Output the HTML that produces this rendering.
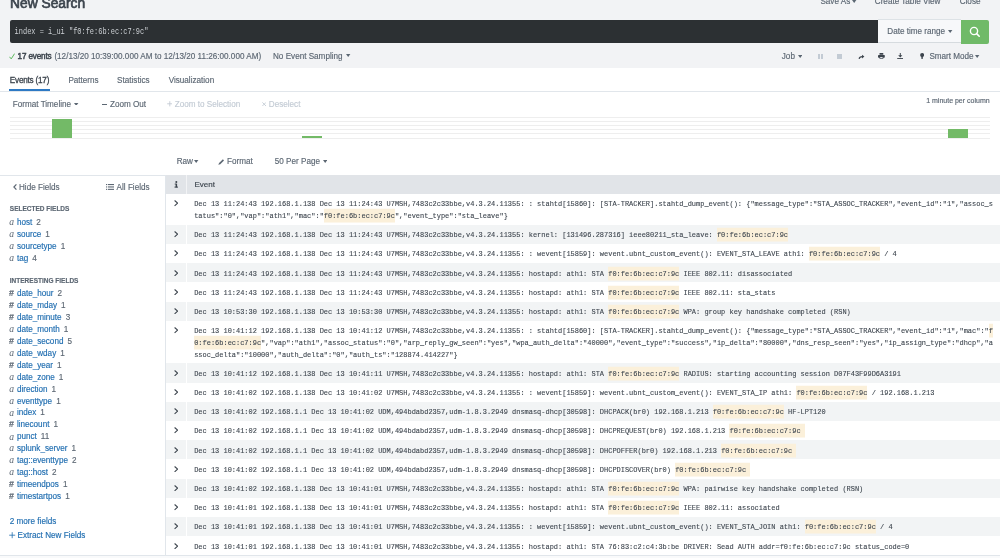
<!DOCTYPE html><html><head><meta charset="utf-8"><title>New Search</title><style>
*{margin:0;padding:0}
html,body{width:1000px;height:558px;overflow:hidden;background:#fff}
body{position:relative;font-family:"Liberation Sans",sans-serif}
#wrap{position:absolute;left:0;top:0;width:1000px;height:558px;overflow:hidden;will-change:transform}
.r{position:absolute;display:block}
.s,.m,.i,.i2{position:absolute;white-space:nowrap;line-height:1}
.s{font-family:"Liberation Sans",sans-serif;-webkit-text-stroke-width:0.15px}
.m{font-family:"Liberation Mono",monospace}
.i{font-family:"Liberation Serif",serif;font-style:italic}
.i2{font-family:"Liberation Serif",serif}
.m b{font-weight:normal;background:#fbf0da;padding:2.4px 0 1.6px}
</style></head><body><div id="wrap">
<div class="r" style="left:0.00px;top:0.00px;width:1000.00px;height:68.00px;background:#f2f3f5;"></div>
<div class="s" style="left:10.00px;top:-2.90px;font-size:13.8px;color:#3c444d;-webkit-text-stroke:0.65px #3c444d;">New Search</div>
<div class="s" style="left:820.40px;top:-2.08px;font-size:8.15px;color:#5c6773;">Save As</div>
<svg class="r" style="left:852.40px;top:-0.30px" width="4.4" height="2.9" viewBox="0 0 4.4 2.9"><path d="M0 0H4.4L2.2 2.9Z" fill="#5c6773"/></svg>
<div class="s" style="left:874.80px;top:-2.08px;font-size:8.15px;color:#5c6773;">Create Table View</div>
<div class="s" style="left:959.70px;top:-2.08px;font-size:8.15px;color:#5c6773;">Close</div>
<div class="r" style="left:10.00px;top:20.00px;width:868.00px;height:22.50px;background:#2c3033;border-radius:2px 0 0 2px"></div>
<div class="m" style="left:14.60px;top:28.81px;font-size:6.975px;color:#cdd1d5;transform:scaleY(1.2);transform-origin:0 5.35px;">index = i_ui "f0:fe:6b:ec:c7:9c"</div>
<div class="r" style="left:878.40px;top:19.40px;width:82.60px;height:24.00px;background:#f7f8fa;box-sizing:border-box;border-top:1px solid #dde2e6;border-bottom:1px solid #d6dbdf"></div>
<div class="s" style="left:887.30px;top:27.72px;font-size:8.15px;color:#5c6773;">Date time range</div>
<svg class="r" style="left:948.20px;top:29.80px" width="4.4" height="2.9" viewBox="0 0 4.4 2.9"><path d="M0 0H4.4L2.2 2.9Z" fill="#5c6773"/></svg>
<div class="r" style="left:961.00px;top:19.50px;width:27.70px;height:24.00px;background:#70ba68;border-radius:0 2px 2px 0"></div>
<svg class="r" style="left:968px;top:24.5px" width="14" height="14" viewBox="0 0 14 14"><circle cx="6" cy="6" r="3.6" fill="none" stroke="#fff" stroke-width="1.4"/><path d="M8.6 8.6L11.2 11.2" stroke="#fff" stroke-width="1.6" stroke-linecap="round"/></svg>
<svg class="r" style="left:9.4px;top:52.6px" width="6" height="6.6" viewBox="0 0 6 6.6"><path d="M0.5 3.8L2.2 5.9L5.6 0.6" fill="none" stroke="#5cb85c" stroke-width="1"/></svg>
<div class="s" style="left:17.60px;top:52.62px;font-size:8.15px;color:#3c444d;-webkit-text-stroke:0.45px #3c444d;letter-spacing:-0.15px;">17 events</div>
<div class="s" style="left:54.40px;top:52.62px;font-size:8.15px;color:#5c6773;">(12/13/20 10:39:00.000 AM to 12/13/20 11:26:00.000 AM)</div>
<div class="s" style="left:273.00px;top:52.62px;font-size:8.15px;color:#5c6773;">No Event Sampling</div>
<svg class="r" style="left:346.20px;top:54.40px" width="4.4" height="2.9" viewBox="0 0 4.4 2.9"><path d="M0 0H4.4L2.2 2.9Z" fill="#5c6773"/></svg>
<div class="s" style="left:781.80px;top:52.92px;font-size:8.15px;color:#5c6773;">Job</div>
<svg class="r" style="left:797.80px;top:54.70px" width="4.4" height="2.9" viewBox="0 0 4.4 2.9"><path d="M0 0H4.4L2.2 2.9Z" fill="#5c6773"/></svg>
<div class="r" style="left:818.00px;top:54.00px;width:1.60px;height:4.80px;background:#c3cbd4;"></div>
<div class="r" style="left:821.30px;top:54.00px;width:1.60px;height:4.80px;background:#c3cbd4;"></div>
<div class="r" style="left:837.20px;top:54.00px;width:4.70px;height:4.80px;background:#c3cbd4;"></div>
<svg class="r" style="left:858px;top:54px" width="7" height="6" viewBox="0 0 7 6"><path d="M1.1 4.9C1.3 3.5 2.3 2.6 4.3 2.6" fill="none" stroke="#3c444d" stroke-width="1.1"/><path d="M4 0.7L6.4 2.6L4 4.5Z" fill="#3c444d"/></svg>
<svg class="r" style="left:877.5px;top:53px" width="7" height="6" viewBox="0 0 7 6"><rect x="1.5" y="0" width="3.8" height="1.7" rx="0.3" fill="#3c444d"/><rect x="0" y="1.9" width="6.8" height="2.9" rx="0.7" fill="#3c444d"/><rect x="1.5" y="3.6" width="3.8" height="2.2" rx="0.3" fill="#3c444d"/><rect x="2.2" y="4.1" width="2.4" height="1" fill="#f2f3f5"/></svg>
<svg class="r" style="left:896.6px;top:53px" width="6.6" height="6.2" viewBox="0 0 6.6 6.2"><path d="M3.3 0V3" stroke="#3c444d" stroke-width="1"/><path d="M1.2 2.3L3.3 4.4L5.4 2.3Z" fill="#3c444d"/><path d="M0.2 5.6H6.4" stroke="#3c444d" stroke-width="1"/></svg>
<svg class="r" style="left:920px;top:53px" width="4.2" height="6" viewBox="0 0 4.2 6"><circle cx="2.1" cy="2" r="2" fill="#3c444d"/><rect x="1.35" y="3" width="1.5" height="2.9" fill="#3c444d"/></svg>
<div class="s" style="left:929.40px;top:52.92px;font-size:8.15px;color:#5c6773;">Smart Mode</div>
<svg class="r" style="left:975.40px;top:54.70px" width="4.4" height="2.9" viewBox="0 0 4.4 2.9"><path d="M0 0H4.4L2.2 2.9Z" fill="#5c6773"/></svg>
<div class="s" style="left:9.80px;top:76.92px;font-size:8.15px;color:#3c444d;-webkit-text-stroke:0.3px #3c444d;letter-spacing:-0.2px;">Events (17)</div>
<div class="s" style="left:68.40px;top:76.92px;font-size:8.15px;color:#5c6773;">Patterns</div>
<div class="s" style="left:117.10px;top:76.92px;font-size:8.15px;color:#5c6773;">Statistics</div>
<div class="s" style="left:168.70px;top:76.92px;font-size:8.15px;color:#5c6773;">Visualization</div>
<div class="r" style="left:9.10px;top:89.20px;width:40.70px;height:2.20px;background:#2d79c4;"></div>
<div class="r" style="left:0.00px;top:91.20px;width:1000.00px;height:1.00px;background:#e1e6eb;"></div>
<div class="s" style="left:12.80px;top:100.92px;font-size:8.15px;color:#5c6773;">Format Timeline</div>
<svg class="r" style="left:74.20px;top:102.60px" width="4.4" height="2.9" viewBox="0 0 4.4 2.9"><path d="M0 0H4.4L2.2 2.9Z" fill="#5c6773"/></svg>
<div class="r" style="left:102.40px;top:104.30px;width:5.00px;height:1.00px;background:#5c6773;"></div>
<div class="s" style="left:110.00px;top:100.92px;font-size:8.15px;color:#5c6773;">Zoom Out</div>
<svg class="r" style="left:166.6px;top:101.4px" width="5.6" height="5.6" viewBox="0 0 5.6 5.6"><path d="M2.8 0.2V5.4M0.2 2.8H5.4" stroke="#c3cbd4" stroke-width="0.9"/></svg>
<div class="s" style="left:174.70px;top:100.92px;font-size:8.15px;color:#c3cbd4;">Zoom to Selection</div>
<svg class="r" style="left:261.6px;top:102.2px" width="4.4" height="4.4" viewBox="0 0 4.4 4.4"><path d="M0.4 0.4L4 4M4 0.4L0.4 4" stroke="#c3cbd4" stroke-width="0.9"/></svg>
<div class="s" style="left:268.80px;top:100.92px;font-size:8.15px;color:#c3cbd4;">Deselect</div>
<div class="s" style="left:926.20px;top:97.10px;font-size:7.0px;color:#5c6773;">1 minute per column</div>
<div class="r" style="left:10.00px;top:116.80px;width:980.00px;height:1.00px;background:#eeeeee;"></div>
<div class="r" style="left:10.00px;top:120.90px;width:980.00px;height:1.00px;background:#eeeeee;"></div>
<div class="r" style="left:10.00px;top:125.00px;width:980.00px;height:1.00px;background:#eeeeee;"></div>
<div class="r" style="left:10.00px;top:129.20px;width:980.00px;height:1.00px;background:#eeeeee;"></div>
<div class="r" style="left:10.00px;top:133.40px;width:980.00px;height:1.00px;background:#eeeeee;"></div>
<div class="r" style="left:10.00px;top:137.70px;width:980.00px;height:1.00px;background:#eeeeee;"></div>
<div class="r" style="left:52.00px;top:118.80px;width:20.00px;height:19.00px;background:#73ba67;"></div>
<div class="r" style="left:302.00px;top:136.20px;width:20.00px;height:1.70px;background:#73ba67;"></div>
<div class="r" style="left:948.00px;top:129.00px;width:20.20px;height:8.80px;background:#73ba67;"></div>
<div class="s" style="left:176.70px;top:158.33px;font-size:8.15px;color:#5c6773;">Raw</div>
<svg class="r" style="left:194.30px;top:160.10px" width="4.4" height="2.9" viewBox="0 0 4.4 2.9"><path d="M0 0H4.4L2.2 2.9Z" fill="#5c6773"/></svg>
<svg class="r" style="left:217.8px;top:159px" width="6.4" height="6" viewBox="0 0 6.4 6"><path d="M0.3 5.7L1.1 4.1L4.9 0.3L6.1 1.5L2.3 5.3Z" fill="#5c6773"/></svg>
<div class="s" style="left:227.00px;top:158.33px;font-size:8.15px;color:#5c6773;">Format</div>
<div class="s" style="left:274.80px;top:158.33px;font-size:8.15px;color:#5c6773;">50 Per Page</div>
<svg class="r" style="left:322.50px;top:160.10px" width="4.4" height="2.9" viewBox="0 0 4.4 2.9"><path d="M0 0H4.4L2.2 2.9Z" fill="#5c6773"/></svg>
<div class="r" style="left:0.00px;top:174.50px;width:165.00px;height:1.00px;background:#e1e6eb;"></div>
<div class="r" style="left:165.00px;top:174.50px;width:1.00px;height:384.00px;background:#e1e6eb;"></div>
<svg class="r" style="left:12.8px;top:184px" width="4" height="6" viewBox="0 0 4 6"><path d="M3.4 0.4L0.9 3L3.4 5.6" fill="none" stroke="#5c6773" stroke-width="1.2"/></svg>
<div class="s" style="left:19.00px;top:183.93px;font-size:8.15px;color:#5c6773;">Hide Fields</div>
<svg class="r" style="left:106px;top:184px" width="8" height="6" viewBox="0 0 8 6"><g fill="#5c6773"><rect x="0" y="0" width="1.2" height="1.1"/><rect x="0" y="2.4" width="1.2" height="1.1"/><rect x="0" y="4.8" width="1.2" height="1.1"/><rect x="2" y="0" width="6" height="1.1"/><rect x="2" y="2.4" width="6" height="1.1"/><rect x="2" y="4.8" width="6" height="1.1"/></g></svg>
<div class="s" style="left:116.60px;top:183.93px;font-size:8.15px;color:#5c6773;">All Fields</div>
<div class="s" style="left:9.80px;top:206.25px;font-size:6.5px;color:#5c6773;font-weight:bold;">SELECTED FIELDS</div>
<div class="i" style="left:9.20px;top:217.20px;font-size:9.6px;color:#5c6773;">a</div>
<div class="s" style="left:16.90px;top:218.93px;font-size:8.15px;color:#1f6db0;">host<span style="color:#5c6773;margin-left:4px">2</span></div>
<div class="i" style="left:9.20px;top:229.13px;font-size:9.6px;color:#5c6773;">a</div>
<div class="s" style="left:16.90px;top:230.86px;font-size:8.15px;color:#1f6db0;">source<span style="color:#5c6773;margin-left:4px">1</span></div>
<div class="i" style="left:9.20px;top:241.06px;font-size:9.6px;color:#5c6773;">a</div>
<div class="s" style="left:16.90px;top:242.79px;font-size:8.15px;color:#1f6db0;">sourcetype<span style="color:#5c6773;margin-left:4px">1</span></div>
<div class="i" style="left:9.20px;top:252.99px;font-size:9.6px;color:#5c6773;">a</div>
<div class="s" style="left:16.90px;top:254.72px;font-size:8.15px;color:#1f6db0;">tag<span style="color:#5c6773;margin-left:4px">4</span></div>
<div class="s" style="left:9.80px;top:277.55px;font-size:6.5px;color:#5c6773;font-weight:bold;">INTERESTING FIELDS</div>
<div class="s" style="left:9.00px;top:289.40px;font-size:8.8px;color:#5c6773;font-weight:bold;">#</div>
<div class="s" style="left:16.90px;top:290.43px;font-size:8.15px;color:#1f6db0;">date_hour<span style="color:#5c6773;margin-left:4px">2</span></div>
<div class="s" style="left:9.00px;top:301.30px;font-size:8.8px;color:#5c6773;font-weight:bold;">#</div>
<div class="s" style="left:16.90px;top:302.32px;font-size:8.15px;color:#1f6db0;">date_mday<span style="color:#5c6773;margin-left:4px">1</span></div>
<div class="s" style="left:9.00px;top:313.20px;font-size:8.8px;color:#5c6773;font-weight:bold;">#</div>
<div class="s" style="left:16.90px;top:314.23px;font-size:8.15px;color:#1f6db0;">date_minute<span style="color:#5c6773;margin-left:4px">3</span></div>
<div class="i" style="left:9.20px;top:324.40px;font-size:9.6px;color:#5c6773;">a</div>
<div class="s" style="left:16.90px;top:326.12px;font-size:8.15px;color:#1f6db0;">date_month<span style="color:#5c6773;margin-left:4px">1</span></div>
<div class="s" style="left:9.00px;top:337.00px;font-size:8.8px;color:#5c6773;font-weight:bold;">#</div>
<div class="s" style="left:16.90px;top:338.03px;font-size:8.15px;color:#1f6db0;">date_second<span style="color:#5c6773;margin-left:4px">5</span></div>
<div class="i" style="left:9.20px;top:348.20px;font-size:9.6px;color:#5c6773;">a</div>
<div class="s" style="left:16.90px;top:349.93px;font-size:8.15px;color:#1f6db0;">date_wday<span style="color:#5c6773;margin-left:4px">1</span></div>
<div class="s" style="left:9.00px;top:360.80px;font-size:8.8px;color:#5c6773;font-weight:bold;">#</div>
<div class="s" style="left:16.90px;top:361.82px;font-size:8.15px;color:#1f6db0;">date_year<span style="color:#5c6773;margin-left:4px">1</span></div>
<div class="i" style="left:9.20px;top:372.00px;font-size:9.6px;color:#5c6773;">a</div>
<div class="s" style="left:16.90px;top:373.73px;font-size:8.15px;color:#1f6db0;">date_zone<span style="color:#5c6773;margin-left:4px">1</span></div>
<div class="i" style="left:9.20px;top:383.90px;font-size:9.6px;color:#5c6773;">a</div>
<div class="s" style="left:16.90px;top:385.62px;font-size:8.15px;color:#1f6db0;">direction<span style="color:#5c6773;margin-left:4px">1</span></div>
<div class="i" style="left:9.20px;top:395.80px;font-size:9.6px;color:#5c6773;">a</div>
<div class="s" style="left:16.90px;top:397.53px;font-size:8.15px;color:#1f6db0;">eventtype<span style="color:#5c6773;margin-left:4px">1</span></div>
<div class="i" style="left:9.20px;top:407.70px;font-size:9.6px;color:#5c6773;">a</div>
<div class="s" style="left:16.90px;top:409.43px;font-size:8.15px;color:#1f6db0;">index<span style="color:#5c6773;margin-left:4px">1</span></div>
<div class="s" style="left:9.00px;top:420.30px;font-size:8.8px;color:#5c6773;font-weight:bold;">#</div>
<div class="s" style="left:16.90px;top:421.32px;font-size:8.15px;color:#1f6db0;">linecount<span style="color:#5c6773;margin-left:4px">1</span></div>
<div class="i" style="left:9.20px;top:431.50px;font-size:9.6px;color:#5c6773;">a</div>
<div class="s" style="left:16.90px;top:433.23px;font-size:8.15px;color:#1f6db0;">punct<span style="color:#5c6773;margin-left:4px">11</span></div>
<div class="i" style="left:9.20px;top:443.40px;font-size:9.6px;color:#5c6773;">a</div>
<div class="s" style="left:16.90px;top:445.13px;font-size:8.15px;color:#1f6db0;">splunk_server<span style="color:#5c6773;margin-left:4px">1</span></div>
<div class="i" style="left:9.20px;top:455.30px;font-size:9.6px;color:#5c6773;">a</div>
<div class="s" style="left:16.90px;top:457.03px;font-size:8.15px;color:#1f6db0;">tag::eventtype<span style="color:#5c6773;margin-left:4px">2</span></div>
<div class="i" style="left:9.20px;top:467.20px;font-size:9.6px;color:#5c6773;">a</div>
<div class="s" style="left:16.90px;top:468.93px;font-size:8.15px;color:#1f6db0;">tag::host<span style="color:#5c6773;margin-left:4px">2</span></div>
<div class="s" style="left:9.00px;top:479.80px;font-size:8.8px;color:#5c6773;font-weight:bold;">#</div>
<div class="s" style="left:16.90px;top:480.82px;font-size:8.15px;color:#1f6db0;">timeendpos<span style="color:#5c6773;margin-left:4px">1</span></div>
<div class="s" style="left:9.00px;top:491.70px;font-size:8.8px;color:#5c6773;font-weight:bold;">#</div>
<div class="s" style="left:16.90px;top:492.73px;font-size:8.15px;color:#1f6db0;">timestartpos<span style="color:#5c6773;margin-left:4px">1</span></div>
<div class="s" style="left:9.80px;top:518.32px;font-size:8.15px;color:#1f6db0;">2 more fields</div>
<svg class="r" style="left:9.4px;top:532.2px" width="6.4" height="6.4" viewBox="0 0 6.4 6.4"><path d="M3.2 0.2V6.2M0.2 3.2H6.2" stroke="#1f6db0" stroke-width="0.8"/></svg>
<div class="s" style="left:17.60px;top:532.32px;font-size:8.15px;color:#1f6db0;">Extract New Fields</div>
<div class="r" style="left:165.50px;top:175.00px;width:834.50px;height:19.00px;background:#e1e4e8;"></div>
<div class="r" style="left:185.80px;top:175.00px;width:1.30px;height:19.00px;background:#f2f3f5;"></div>
<svg class="r" style="left:173.6px;top:180.6px" width="4.4" height="7" viewBox="0 0 4.4 7"><g fill="#3c444d"><circle cx="2.3" cy="1.1" r="1"/><rect x="1.6" y="2.6" width="1.5" height="3.8"/><rect x="0.5" y="5.6" width="3.6" height="1"/><rect x="0.7" y="2.6" width="1.2" height="0.9"/></g></svg>
<div class="s" style="left:194.40px;top:180.80px;font-size:8.0px;color:#3c444d;">Event</div>
<svg class="r" style="left:173.9px;top:200.40px" width="4.4" height="6.4" viewBox="0 0 4.4 6.4"><path d="M0.6 0.5L3.6 3.2L0.6 5.9" fill="none" stroke="#3c444d" stroke-width="1.1"/></svg>
<div class="m" style="left:194.20px;top:201.41px;font-size:6.975px;color:#3c444d;transform:scaleY(1.15);-webkit-text-stroke:0.1px #3c444d;transform-origin:0 5.35px;">Dec 13 11:24:43 192.168.1.138 Dec 13 11:24:43 U7MSH,7483c2c33bbe,v4.3.24.11355: : stahtd[15860]: [STA-TRACKER].stahtd_dump_event(): {"message_type":"STA_ASSOC_TRACKER","event_id":"1","assoc_s</div>
<div class="m" style="left:194.20px;top:213.06px;font-size:6.975px;color:#3c444d;transform:scaleY(1.15);-webkit-text-stroke:0.1px #3c444d;transform-origin:0 5.35px;">tatus":"0","vap":"ath1","mac":"<b>f0:fe:6b:ec:c7:9c</b>","event_type":"sta_leave"}</div>
<div class="r" style="left:165.50px;top:224.85px;width:834.50px;height:19.20px;background:#f2f4f5;"></div>
<div class="r" style="left:185.80px;top:224.85px;width:1.30px;height:19.20px;background:#ffffff;"></div>
<svg class="r" style="left:173.9px;top:231.25px" width="4.4" height="6.4" viewBox="0 0 4.4 6.4"><path d="M0.6 0.5L3.6 3.2L0.6 5.9" fill="none" stroke="#3c444d" stroke-width="1.1"/></svg>
<div class="m" style="left:194.20px;top:232.26px;font-size:6.975px;color:#3c444d;transform:scaleY(1.15);-webkit-text-stroke:0.1px #3c444d;transform-origin:0 5.35px;">Dec 13 11:24:43 192.168.1.138 Dec 13 11:24:43 U7MSH,7483c2c33bbe,v4.3.24.11355: kernel: [131496.287316] ieee80211_sta_leave: <b>f0:fe:6b:ec:c7:9c</b></div>
<svg class="r" style="left:173.9px;top:250.45px" width="4.4" height="6.4" viewBox="0 0 4.4 6.4"><path d="M0.6 0.5L3.6 3.2L0.6 5.9" fill="none" stroke="#3c444d" stroke-width="1.1"/></svg>
<div class="m" style="left:194.20px;top:251.46px;font-size:6.975px;color:#3c444d;transform:scaleY(1.15);-webkit-text-stroke:0.1px #3c444d;transform-origin:0 5.35px;">Dec 13 11:24:43 192.168.1.138 Dec 13 11:24:43 U7MSH,7483c2c33bbe,v4.3.24.11355: : wevent[15859]: wevent.ubnt_custom_event(): EVENT_STA_LEAVE ath1: <b>f0:fe:6b:ec:c7:9c</b> / 4</div>
<div class="r" style="left:165.50px;top:263.25px;width:834.50px;height:19.20px;background:#f2f4f5;"></div>
<div class="r" style="left:185.80px;top:263.25px;width:1.30px;height:19.20px;background:#ffffff;"></div>
<svg class="r" style="left:173.9px;top:269.65px" width="4.4" height="6.4" viewBox="0 0 4.4 6.4"><path d="M0.6 0.5L3.6 3.2L0.6 5.9" fill="none" stroke="#3c444d" stroke-width="1.1"/></svg>
<div class="m" style="left:194.20px;top:270.66px;font-size:6.975px;color:#3c444d;transform:scaleY(1.15);-webkit-text-stroke:0.1px #3c444d;transform-origin:0 5.35px;">Dec 13 11:24:43 192.168.1.138 Dec 13 11:24:43 U7MSH,7483c2c33bbe,v4.3.24.11355: hostapd: ath1: STA <b>f0:fe:6b:ec:c7:9c</b> IEEE 802.11: disassociated</div>
<svg class="r" style="left:173.9px;top:288.85px" width="4.4" height="6.4" viewBox="0 0 4.4 6.4"><path d="M0.6 0.5L3.6 3.2L0.6 5.9" fill="none" stroke="#3c444d" stroke-width="1.1"/></svg>
<div class="m" style="left:194.20px;top:289.86px;font-size:6.975px;color:#3c444d;transform:scaleY(1.15);-webkit-text-stroke:0.1px #3c444d;transform-origin:0 5.35px;">Dec 13 11:24:43 192.168.1.138 Dec 13 11:24:43 U7MSH,7483c2c33bbe,v4.3.24.11355: hostapd: ath1: STA <b>f0:fe:6b:ec:c7:9c</b> IEEE 802.11: sta_stats</div>
<div class="r" style="left:165.50px;top:301.65px;width:834.50px;height:19.20px;background:#f2f4f5;"></div>
<div class="r" style="left:185.80px;top:301.65px;width:1.30px;height:19.20px;background:#ffffff;"></div>
<svg class="r" style="left:173.9px;top:308.05px" width="4.4" height="6.4" viewBox="0 0 4.4 6.4"><path d="M0.6 0.5L3.6 3.2L0.6 5.9" fill="none" stroke="#3c444d" stroke-width="1.1"/></svg>
<div class="m" style="left:194.20px;top:309.06px;font-size:6.975px;color:#3c444d;transform:scaleY(1.15);-webkit-text-stroke:0.1px #3c444d;transform-origin:0 5.35px;">Dec 13 10:53:30 192.168.1.138 Dec 13 10:53:30 U7MSH,7483c2c33bbe,v4.3.24.11355: hostapd: ath1: STA <b>f0:fe:6b:ec:c7:9c</b> WPA: group key handshake completed (RSN)</div>
<svg class="r" style="left:173.9px;top:327.25px" width="4.4" height="6.4" viewBox="0 0 4.4 6.4"><path d="M0.6 0.5L3.6 3.2L0.6 5.9" fill="none" stroke="#3c444d" stroke-width="1.1"/></svg>
<div class="m" style="left:194.20px;top:328.26px;font-size:6.975px;color:#3c444d;transform:scaleY(1.15);-webkit-text-stroke:0.1px #3c444d;transform-origin:0 5.35px;">Dec 13 10:41:12 192.168.1.138 Dec 13 10:41:12 U7MSH,7483c2c33bbe,v4.3.24.11355: : stahtd[15860]: [STA-TRACKER].stahtd_dump_event(): {"message_type":"STA_ASSOC_TRACKER","event_id":"1","mac":"<b>f</b></div>
<div class="m" style="left:194.20px;top:339.91px;font-size:6.975px;color:#3c444d;transform:scaleY(1.15);-webkit-text-stroke:0.1px #3c444d;transform-origin:0 5.35px;"><b>0:fe:6b:ec:c7:9c</b>","vap":"ath1","assoc_status":"0","arp_reply_gw_seen":"yes","wpa_auth_delta":"40000","event_type":"success","ip_delta":"80000","dns_resp_seen":"yes","ip_assign_type":"dhcp","a</div>
<div class="m" style="left:194.20px;top:351.56px;font-size:6.975px;color:#3c444d;transform:scaleY(1.15);-webkit-text-stroke:0.1px #3c444d;transform-origin:0 5.35px;">ssoc_delta":"10000","auth_delta":"0","auth_ts":"128874.414227"}</div>
<div class="r" style="left:165.50px;top:363.35px;width:834.50px;height:19.20px;background:#f2f4f5;"></div>
<div class="r" style="left:185.80px;top:363.35px;width:1.30px;height:19.20px;background:#ffffff;"></div>
<svg class="r" style="left:173.9px;top:369.75px" width="4.4" height="6.4" viewBox="0 0 4.4 6.4"><path d="M0.6 0.5L3.6 3.2L0.6 5.9" fill="none" stroke="#3c444d" stroke-width="1.1"/></svg>
<div class="m" style="left:194.20px;top:370.76px;font-size:6.975px;color:#3c444d;transform:scaleY(1.15);-webkit-text-stroke:0.1px #3c444d;transform-origin:0 5.35px;">Dec 13 10:41:12 192.168.1.138 Dec 13 10:41:11 U7MSH,7483c2c33bbe,v4.3.24.11355: hostapd: ath1: STA <b>f0:fe:6b:ec:c7:9c</b> RADIUS: starting accounting session D07F43F99D6A3191</div>
<svg class="r" style="left:173.9px;top:388.95px" width="4.4" height="6.4" viewBox="0 0 4.4 6.4"><path d="M0.6 0.5L3.6 3.2L0.6 5.9" fill="none" stroke="#3c444d" stroke-width="1.1"/></svg>
<div class="m" style="left:194.20px;top:389.96px;font-size:6.975px;color:#3c444d;transform:scaleY(1.15);-webkit-text-stroke:0.1px #3c444d;transform-origin:0 5.35px;">Dec 13 10:41:02 192.168.1.138 Dec 13 10:41:02 U7MSH,7483c2c33bbe,v4.3.24.11355: : wevent[15859]: wevent.ubnt_custom_event(): EVENT_STA_IP ath1: <b>f0:fe:6b:ec:c7:9c</b> / 192.168.1.213</div>
<div class="r" style="left:165.50px;top:401.75px;width:834.50px;height:19.20px;background:#f2f4f5;"></div>
<div class="r" style="left:185.80px;top:401.75px;width:1.30px;height:19.20px;background:#ffffff;"></div>
<svg class="r" style="left:173.9px;top:408.15px" width="4.4" height="6.4" viewBox="0 0 4.4 6.4"><path d="M0.6 0.5L3.6 3.2L0.6 5.9" fill="none" stroke="#3c444d" stroke-width="1.1"/></svg>
<div class="m" style="left:194.20px;top:409.16px;font-size:6.975px;color:#3c444d;transform:scaleY(1.15);-webkit-text-stroke:0.1px #3c444d;transform-origin:0 5.35px;">Dec 13 10:41:02 192.168.1.1 Dec 13 10:41:02 UDM,494bdabd2357,udm-1.8.3.2949 dnsmasq-dhcp[30598]: DHCPACK(br0) 192.168.1.213 <b>f0:fe:6b:ec:c7:9c</b> HF-LPT120</div>
<svg class="r" style="left:173.9px;top:427.35px" width="4.4" height="6.4" viewBox="0 0 4.4 6.4"><path d="M0.6 0.5L3.6 3.2L0.6 5.9" fill="none" stroke="#3c444d" stroke-width="1.1"/></svg>
<div class="m" style="left:194.20px;top:428.36px;font-size:6.975px;color:#3c444d;transform:scaleY(1.15);-webkit-text-stroke:0.1px #3c444d;transform-origin:0 5.35px;">Dec 13 10:41:02 192.168.1.1 Dec 13 10:41:02 UDM,494bdabd2357,udm-1.8.3.2949 dnsmasq-dhcp[30598]: DHCPREQUEST(br0) 192.168.1.213 <b>f0:fe:6b:ec:c7:9c </b></div>
<div class="r" style="left:165.50px;top:440.15px;width:834.50px;height:19.20px;background:#f2f4f5;"></div>
<div class="r" style="left:185.80px;top:440.15px;width:1.30px;height:19.20px;background:#ffffff;"></div>
<svg class="r" style="left:173.9px;top:446.55px" width="4.4" height="6.4" viewBox="0 0 4.4 6.4"><path d="M0.6 0.5L3.6 3.2L0.6 5.9" fill="none" stroke="#3c444d" stroke-width="1.1"/></svg>
<div class="m" style="left:194.20px;top:447.56px;font-size:6.975px;color:#3c444d;transform:scaleY(1.15);-webkit-text-stroke:0.1px #3c444d;transform-origin:0 5.35px;">Dec 13 10:41:02 192.168.1.1 Dec 13 10:41:02 UDM,494bdabd2357,udm-1.8.3.2949 dnsmasq-dhcp[30598]: DHCPOFFER(br0) 192.168.1.213 <b>f0:fe:6b:ec:c7:9c </b></div>
<svg class="r" style="left:173.9px;top:465.75px" width="4.4" height="6.4" viewBox="0 0 4.4 6.4"><path d="M0.6 0.5L3.6 3.2L0.6 5.9" fill="none" stroke="#3c444d" stroke-width="1.1"/></svg>
<div class="m" style="left:194.20px;top:466.76px;font-size:6.975px;color:#3c444d;transform:scaleY(1.15);-webkit-text-stroke:0.1px #3c444d;transform-origin:0 5.35px;">Dec 13 10:41:02 192.168.1.1 Dec 13 10:41:02 UDM,494bdabd2357,udm-1.8.3.2949 dnsmasq-dhcp[30598]: DHCPDISCOVER(br0) <b>f0:fe:6b:ec:c7:9c </b></div>
<div class="r" style="left:165.50px;top:478.55px;width:834.50px;height:19.20px;background:#f2f4f5;"></div>
<div class="r" style="left:185.80px;top:478.55px;width:1.30px;height:19.20px;background:#ffffff;"></div>
<svg class="r" style="left:173.9px;top:484.95px" width="4.4" height="6.4" viewBox="0 0 4.4 6.4"><path d="M0.6 0.5L3.6 3.2L0.6 5.9" fill="none" stroke="#3c444d" stroke-width="1.1"/></svg>
<div class="m" style="left:194.20px;top:485.96px;font-size:6.975px;color:#3c444d;transform:scaleY(1.15);-webkit-text-stroke:0.1px #3c444d;transform-origin:0 5.35px;">Dec 13 10:41:02 192.168.1.138 Dec 13 10:41:01 U7MSH,7483c2c33bbe,v4.3.24.11355: hostapd: ath1: STA <b>f0:fe:6b:ec:c7:9c</b> WPA: pairwise key handshake completed (RSN)</div>
<svg class="r" style="left:173.9px;top:504.15px" width="4.4" height="6.4" viewBox="0 0 4.4 6.4"><path d="M0.6 0.5L3.6 3.2L0.6 5.9" fill="none" stroke="#3c444d" stroke-width="1.1"/></svg>
<div class="m" style="left:194.20px;top:505.16px;font-size:6.975px;color:#3c444d;transform:scaleY(1.15);-webkit-text-stroke:0.1px #3c444d;transform-origin:0 5.35px;">Dec 13 10:41:01 192.168.1.138 Dec 13 10:41:01 U7MSH,7483c2c33bbe,v4.3.24.11355: hostapd: ath1: STA <b>f0:fe:6b:ec:c7:9c</b> IEEE 802.11: associated</div>
<div class="r" style="left:165.50px;top:516.95px;width:834.50px;height:19.20px;background:#f2f4f5;"></div>
<div class="r" style="left:185.80px;top:516.95px;width:1.30px;height:19.20px;background:#ffffff;"></div>
<svg class="r" style="left:173.9px;top:523.35px" width="4.4" height="6.4" viewBox="0 0 4.4 6.4"><path d="M0.6 0.5L3.6 3.2L0.6 5.9" fill="none" stroke="#3c444d" stroke-width="1.1"/></svg>
<div class="m" style="left:194.20px;top:524.36px;font-size:6.975px;color:#3c444d;transform:scaleY(1.15);-webkit-text-stroke:0.1px #3c444d;transform-origin:0 5.35px;">Dec 13 10:41:01 192.168.1.138 Dec 13 10:41:01 U7MSH,7483c2c33bbe,v4.3.24.11355: : wevent[15859]: wevent.ubnt_custom_event(): EVENT_STA_JOIN ath1: <b>f0:fe:6b:ec:c7:9c</b> / 4</div>
<svg class="r" style="left:173.9px;top:542.55px" width="4.4" height="6.4" viewBox="0 0 4.4 6.4"><path d="M0.6 0.5L3.6 3.2L0.6 5.9" fill="none" stroke="#3c444d" stroke-width="1.1"/></svg>
<div class="m" style="left:194.20px;top:543.56px;font-size:6.975px;color:#3c444d;transform:scaleY(1.15);-webkit-text-stroke:0.1px #3c444d;transform-origin:0 5.35px;">Dec 13 10:41:01 192.168.1.138 Dec 13 10:41:01 U7MSH,7483c2c33bbe,v4.3.24.11355: hostapd: ath1: STA 76:83:c2:c4:3b:be DRIVER: Sead AUTH addr=f0:fe:6b:ec:c7:9c status_code=0</div>
<div class="r" style="left:0.00px;top:555.35px;width:1000.00px;height:1.00px;background:#e1e6eb;"></div>
<div class="r" style="left:0.00px;top:556.35px;width:1000.00px;height:10.00px;background:#f9fafb;"></div>
</div></body></html>
